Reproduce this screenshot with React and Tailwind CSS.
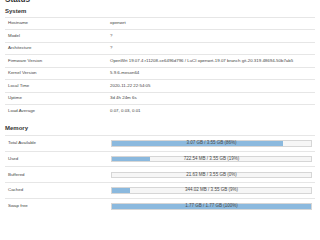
// Status page — LuCI-style system & memory overview, scaled down
const SYSTEM = [
  ["Hostname", "openwrt"],
  ["Model", "?"],
  ["Architecture", "?"],
  ["Firmware Version", "OpenWrt 19.07.4 r11208-ce6496d796 / LuCI openwrt-19.07 branch git-20.319.48694-50b7ab5"],
  ["Kernel Version", "5.9.6-meson64"],
  ["Local Time", "2020-11-22 22:54:05"],
  ["Uptime", "3d 4h 24m 6s"],
  ["Load Average", "0.07, 0.03, 0.01"],
];

const MEMORY = [
  ["Total Available", "3.07 GB / 3.55 GB (86%)", 86],
  ["Used", "722.54 MB / 3.55 GB (19%)", 19],
  ["Buffered", "21.63 MB / 3.55 GB (0%)", 0],
  ["Cached", "344.02 MB / 3.55 GB (9%)", 9],
  ["Swap free", "1.77 GB / 1.77 GB (100%)", 100],
];

function Bar({ text, pct }) {
  return (
    <div className="relative h-[6.4px] w-[201px] border-[0.5px] border-[#d6d6d6] bg-[#f6f6f6]">
      <div className="h-full bg-[#8bb9de]" style={{ width: `${pct}%` }} />
      <div className="absolute inset-0 flex items-center justify-center whitespace-nowrap text-[4.5px] leading-none text-[#4a4a4a]">
        {text}
      </div>
    </div>
  );
}

export default function App() {
  return (
    <div className="h-[214px] w-[320px] overflow-hidden bg-white px-[5px] pt-[5px] font-['Liberation_Sans',Arial,sans-serif]">
      <h2 className="-mt-[10px] h-[9px] text-[8.2px] font-bold leading-[9px] text-[#333]">Status</h2>

      <h3 className="mt-[3.5px] h-[7px] text-[6px] font-bold leading-[7px] text-[#333]">System</h3>
      <div className="mt-[2.2px]">
        {SYSTEM.map(([k, v]) => (
          <div key={k} className="flex h-[12.5px] items-center border-t-[0.7px] border-[#e6e6e6] text-[4.4px] text-[#444]">
            <div className="w-[105px] pl-[3px]">{k}</div>
            <div className="whitespace-nowrap">{v}</div>
          </div>
        ))}
      </div>

      <h3 className="mt-[8.8px] h-[7px] text-[6px] font-bold leading-[7px] text-[#333]">Memory</h3>
      <div className="mt-[2.5px]">
        {MEMORY.map(([k, t, p]) => (
          <div key={k} className="flex h-[15.75px] items-center border-t-[0.7px] border-[#e6e6e6] text-[4.4px] text-[#444]">
            <div className="w-[106px] pl-[3px]">{k}</div>
            <Bar text={t} pct={p} />
          </div>
        ))}
      </div>
    </div>
  );
}
